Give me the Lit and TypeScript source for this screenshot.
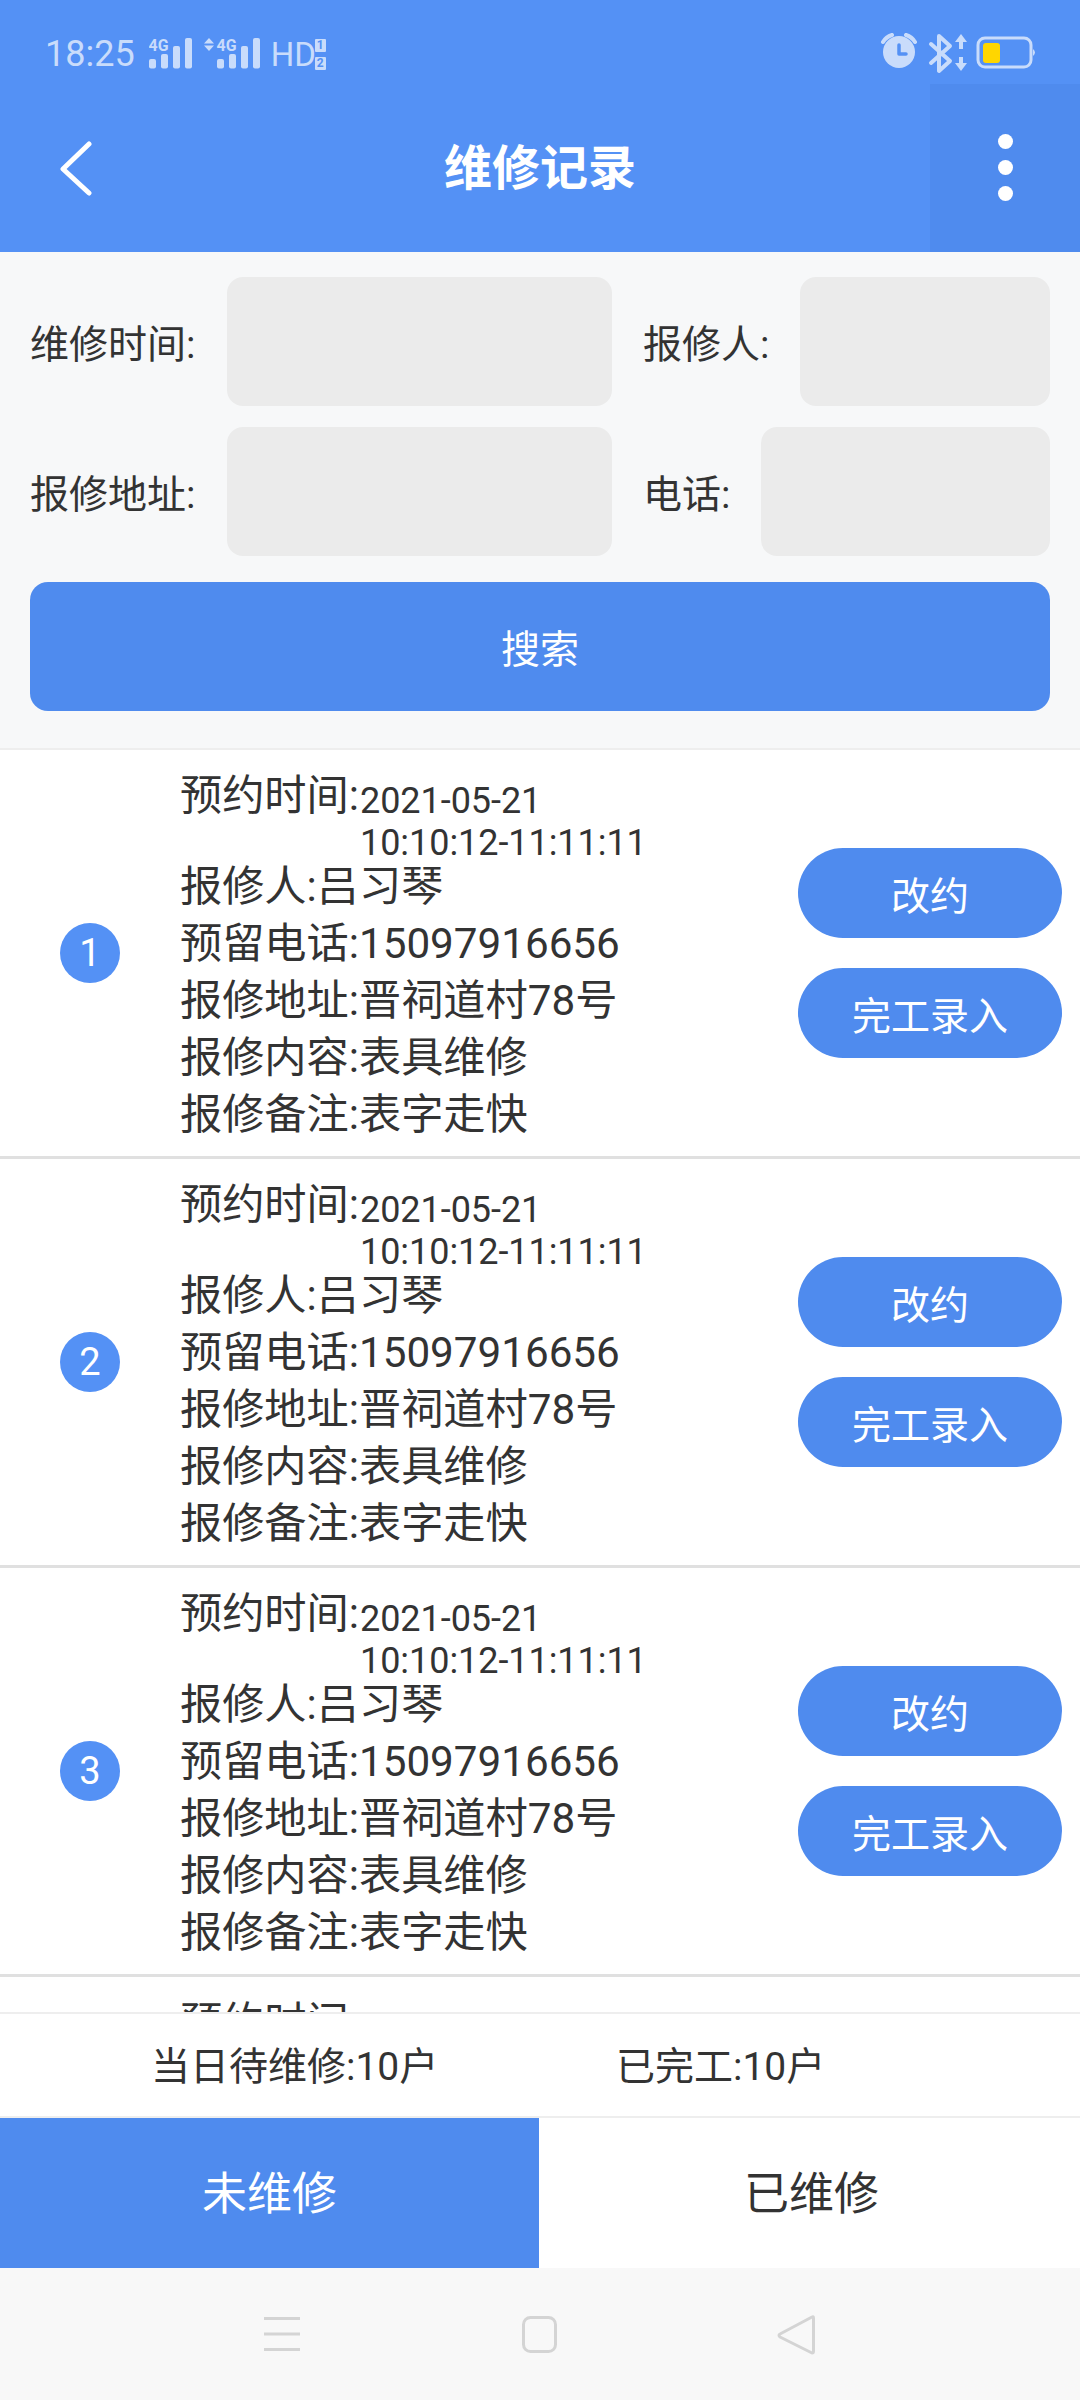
import { LitElement, html, css, svg } from "lit";
import { customElement } from "lit/decorators.js";

const signal = (wide: boolean) => svg`
  <svg class="sig" width=${wide ? 57 : 44} height="32" viewBox="${wide ? -13 : 0} 0 ${wide ? 57 : 44} 32">
    ${wide ? svg`<path d="M-8 0 L-3 5.500 H-13 Z M-8 13 L-3 7.500 H-13 Z" fill="#c9dcfb"/>` : ""}
    <text x="-0.5" y="13" font-size="16" font-weight="700" textLength="20" lengthAdjust="spacingAndGlyphs" font-family="Roboto" fill="#c9dcfb">4G</text>
    <rect x="0" y="21" width="7" height="9.500" rx="2" fill="#c9dcfb"/>
    <rect x="12" y="16" width="7" height="14.500" rx="2" fill="#c9dcfb"/>
    <rect x="24" y="8" width="7" height="22.500" rx="2" fill="#c9dcfb"/>
    <rect x="36" y="0" width="7" height="30.500" rx="2" fill="#c9dcfb"/>
  </svg>`;

@customElement("app-root")
export class AppRoot extends LitElement {
  static styles = css`
    :host { display: block; width: 1080px; height: 2400px; overflow: hidden; background: #fff;
      font-family: Roboto, "Noto Sans CJK SC", sans-serif; color: #333; }
    .page { display: flex; flex-direction: column; height: 2400px; }
    .top { background: #5491f5; height: 252px; flex: none; display: flex; flex-direction: column; }
    .status { height: 84px; flex: none; display: flex; align-items: center; padding: 24px 38px 0 45px; box-sizing: border-box; color: #c9dcfb; }
    .time { font-size: 36px; line-height: 1; margin-right: 14px; }
    .sig { display: block; margin-right: 11px; }
    .hd { font-size: 33px; line-height: 1; margin-left: -1px; width: 44px; }
    .sim { display: flex; flex-direction: column; gap: 5px; }
    .sim span { width: 11px; height: 13px; background: #c9dcfb; color: #5491f5; font-size: 12px; font-weight: 700; line-height: 13px; text-align: center; border-radius: 1px; }
    .spacer { flex: 1; }
    .rightico { display: block; margin-right: -2px; }
    .nav { flex: 1; display: grid; grid-template-columns: 150px 1fr 150px; align-items: stretch; }
    .back { padding: 56px 0 0 58px; }
    .back svg { display: block; }
    .title { color: #fff; font-size: 48px; font-weight: 700; text-align: center; line-height: 168px; margin-top: 1px; }
    .more { background: #4f8bee; display: flex; flex-direction: column; align-items: center; gap: 11px; padding: 50px 0 0 0; }
    .more i { width: 15px; height: 15px; border-radius: 50%; background: #fff; display: block; }

    .filter { background: #f7f8f9; height: 498px; flex: none; box-sizing: border-box; padding: 25px 30px 0; border-bottom: 2px solid #eeeeee; }
    .row { display: flex; align-items: center; height: 129px; margin-bottom: 21px; }
    .lab1 { width: 197px; font-size: 39px; padding-bottom: 2px; }
    .lab2 { font-size: 39px; padding-bottom: 2px; }
    .box { background: #ebebeb; border-radius: 16px; height: 129px; }
    .b1 { width: 385px; margin-right: 31px; }
    .b2 { flex: 1; }
    .lab2.a { width: 157px; }
    .lab2.b { width: 118px; }
    .search { background: #4f8bee; color: #fff; height: 129px; border-radius: 18px; display: flex; align-items: center; justify-content: center; font-size: 39px; margin-top: 26px; padding-bottom: 2px; box-sizing: border-box; }

    .list { flex: 1; min-height: 0; overflow: hidden; }
    .item { height: 406px; border-bottom: 3px solid #e0e0e0; display: flex; align-items: center; }
    .num-col { width: 180px; flex: none; padding-left: 60px; box-sizing: border-box; }
    .num { width: 60px; height: 60px; border-radius: 50%; background: #5491f5; color: #fff; font-size: 38px; display: flex; align-items: center; justify-content: center; }
    .info { flex: 1; min-width: 0; font-size: 42.2px; line-height: 57px; padding-top: 3px; }
    .ln { display: flex; white-space: nowrap; }
    .ln.date { height: 91px; align-items: flex-start; }
    .lbl { width: 180px; flex: none; }
    .d { font-size: 36px; line-height: 42px; padding-top: 13px; letter-spacing: -0.05px; }
    .btns { display: flex; flex-direction: column; gap: 30px; width: 264px; margin-right: 18px; flex: none; }
    .btn { height: 90px; border-radius: 45px; background: #4f8bee; color: #fff; font-size: 39px; display: flex; align-items: center; justify-content: center; }

    .stats { height: 106px; flex: none; box-sizing: border-box; border-top: 2px solid #eeeeee; border-bottom: 2px solid #eeeeee; background: #fff; display: flex; align-items: center; font-size: 39px; padding: 0 0 5px 151px; }
    .s1 { width: 465px; }
    .tabs { height: 150px; flex: none; display: flex; font-size: 45px; background: #fff; }
    .tab { flex: 1; display: flex; align-items: center; justify-content: center; padding: 0 0 6px 4px; }
    .tab.on { background: #4f8bee; color: #fff; flex: none; width: 539px; padding-left: 0; }
    .sys { height: 132px; flex: none; background: #f8f8f8; display: flex; align-items: center; justify-content: center; }
    .sys svg { display: block; }
  `;

  private item(n: number) {
    return html`<div class="item">
      <div class="num-col"><div class="num">${n}</div></div>
      <div class="info">
        <div class="ln date"><span class="lbl">预约时间:</span><span class="d">2021-05-21<br />10:10:12-11:11:11</span></div>
        <div class="ln"><span>报修人:吕习琴</span></div>
        <div class="ln"><span>预留电话:15097916656</span></div>
        <div class="ln"><span>报修地址:晋祠道村78号</span></div>
        <div class="ln"><span>报修内容:表具维修</span></div>
        <div class="ln"><span>报修备注:表字走快</span></div>
      </div>
      <div class="btns"><div class="btn">改约</div><div class="btn">完工录入</div></div>
    </div>`;
  }

  render() {
    return html`<div class="page">
      <div class="top">
        <div class="status">
          <span class="time">18:25</span>
          ${signal(false)}
          ${signal(true)}
          <span class="hd">HD</span>
          <span class="sim"><span>1</span><span>2</span></span>
          <span class="spacer"></span>
          <svg class="rightico" width="165" height="42" viewBox="0 0 165 42" fill="none">
            <circle cx="20" cy="19" r="16" fill="#c9dcfb"/>
            <path d="M4 9 Q7 4 13 2 M36 9 Q33 4 27 2" stroke="#c9dcfb" stroke-width="4" stroke-linecap="round"/>
            <path d="M20 12 V21 H27" stroke="#5491f5" stroke-width="3.500" stroke-linecap="round" stroke-linejoin="round"/>
            <path d="M52 11 L71 28 L60 38 V3 L71 13 L52 30" stroke="#c9dcfb" stroke-width="4" stroke-linejoin="round" stroke-linecap="round"/>
            <path d="M82 6 V16 M82 24 V33" stroke="#c9dcfb" stroke-width="4"/>
            <path d="M82 1 L88 9 H76 Z M82 38 L88 30 H76 Z" fill="#c9dcfb"/>
            <rect x="99" y="5" width="53" height="29" rx="7" stroke="#c9dcfb" stroke-width="3"/>
            <path d="M154 16 Q158 19.500 154 23 Z" fill="#c9dcfb"/>
            <rect x="104" y="10" width="17" height="20" rx="3" fill="#ffd600"/>
          </svg>
        </div>
        <div class="nav">
          <div class="back"><svg width="36" height="56" viewBox="0 0 36 56" fill="none"><path d="M31 4 L5 29 L31 53" stroke="#fff" stroke-width="5" stroke-linecap="round" stroke-linejoin="round"/></svg></div>
          <div class="title">维修记录</div>
          <div class="more"><i></i><i></i><i></i></div>
        </div>
      </div>

      <div class="filter">
        <div class="row"><span class="lab1">维修时间:</span><div class="box b1"></div><span class="lab2 a">报修人:</span><div class="box b2"></div></div>
        <div class="row"><span class="lab1">报修地址:</span><div class="box b1"></div><span class="lab2 b">电话:</span><div class="box b2"></div></div>
        <div class="search">搜索</div>
      </div>

      <div class="list">${[1, 2, 3, 4].map((n) => this.item(n))}</div>

      <div class="stats"><span class="s1">当日待维修:10户</span><span>已完工:10户</span></div>
      <div class="tabs"><div class="tab on">未维修</div><div class="tab">已维修</div></div>
      <div class="sys">
        <svg width="1080" height="132" viewBox="0 0 1080 132" fill="none">
          <path d="M264 50.500 H300 M264 66 H300 M264 81.500 H300" stroke="#d4d4d4" stroke-width="3"/>
          <rect x="523.500" y="49.500" width="32" height="34" rx="7" stroke="#d4d4d4" stroke-width="3"/>
          <path d="M812 49 L780 66 Q778 67 780 69 L812 85 Q813.500 85 813.500 83 V50 Q813.500 48 812 49 Z" stroke="#d4d4d4" stroke-width="3" stroke-linejoin="round"/>
        </svg>
      </div>
    </div>`;
  }
}
